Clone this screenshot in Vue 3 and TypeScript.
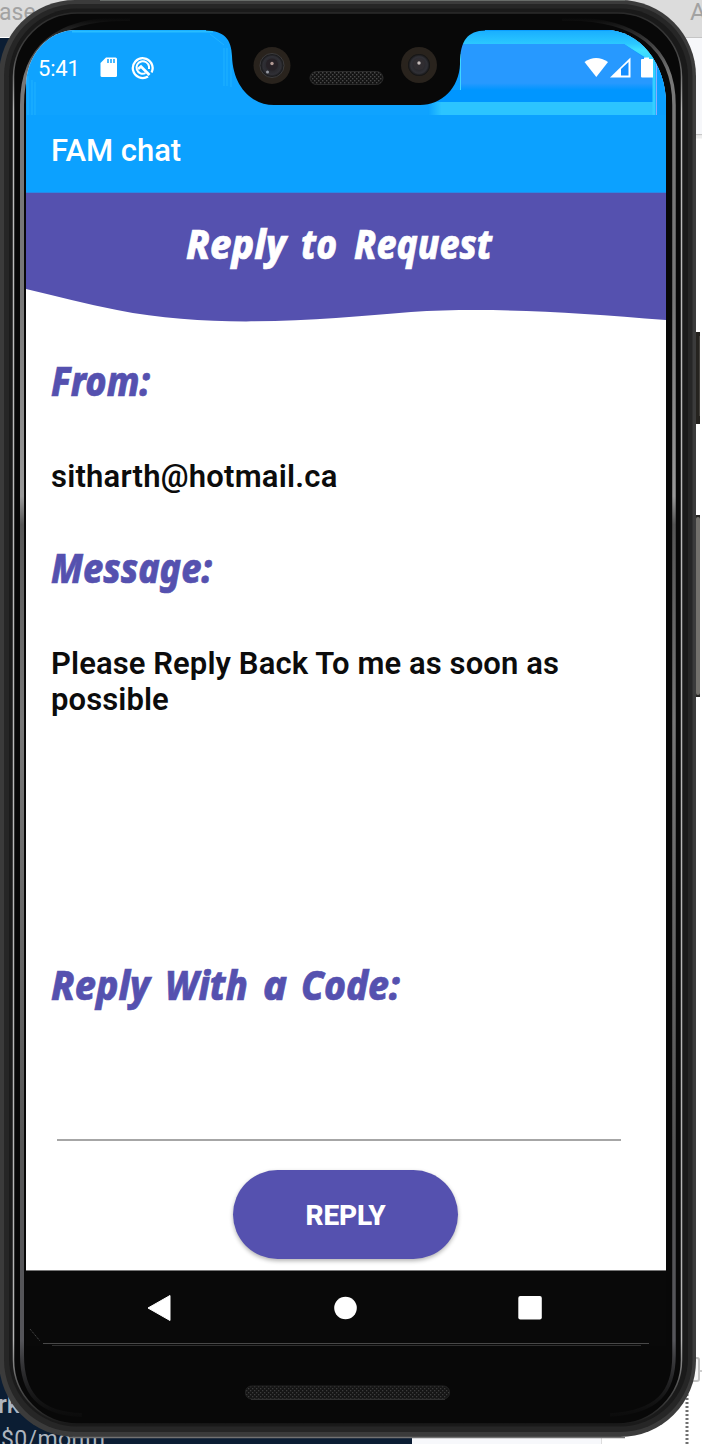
<script setup lang="ts">
interface Word { text: string; x: number; width: number }
interface Section { id: string; words: Word[]; lines: string[] }

const title: Word[] = [
  { text: 'Reply', x: 160, width: 100 },
  { text: 'to', x: 275, width: 36 },
  { text: 'Request', x: 328, width: 138 },
]

const sections: Section[] = [
  { id: 'from', words: [{ text: 'From:', x: 25, width: 99 }], lines: ['sitharth@hotmail.ca'] },
  {
    id: 'message',
    words: [{ text: 'Message:', x: 25, width: 161 }],
    lines: ['Please Reply Back To me as soon as', 'possible'],
  },
  {
    id: 'code',
    words: [
      { text: 'Reply', x: 25, width: 99 },
      { text: 'With', x: 139, width: 83 },
      { text: 'a', x: 237, width: 24 },
      { text: 'Code:', x: 275, width: 99 },
    ],
    lines: [],
  },
]
</script>

<template>
  <div class="stage">
    <svg class="backdrop" width="702" height="1444" viewBox="0 0 702 1444" aria-hidden="true">
      <defs>
        <linearGradient id="rail" gradientUnits="userSpaceOnUse" x1="0" y1="18" x2="0" y2="1425">
          <stop offset="0" stop-color="#8c8c8c" stop-opacity="0" />
          <stop offset="0.04" stop-color="#777" />
          <stop offset="0.2" stop-color="#777" />
          <stop offset="0.34" stop-color="#999" />
          <stop offset="0.36" stop-color="#555" />
          <stop offset="0.5" stop-color="#777" />
          <stop offset="0.8" stop-color="#555" />
          <stop offset="0.94" stop-color="#55555a" />
          <stop offset="1" stop-color="#222" stop-opacity="0" />
        </linearGradient>
        <linearGradient id="edge" gradientUnits="userSpaceOnUse" x1="0" y1="13" x2="0" y2="1425">
          <stop offset="0" stop-color="#2a2a2a" />
          <stop offset="0.03" stop-color="#444" />
          <stop offset="0.07" stop-color="#bbb" />
          <stop offset="0.94" stop-color="#b5b5b5" />
          <stop offset="0.97" stop-color="#555" />
          <stop offset="1" stop-color="#181818" />
        </linearGradient>
        <pattern id="mesh" width="4" height="4" patternUnits="userSpaceOnUse">
          <rect width="4" height="4" fill="#151515" />
          <rect width="1.3" height="1.3" fill="#3c3c3c" />
          <rect x="2" y="2" width="1.3" height="1.3" fill="#3c3c3c" />
        </pattern>
      </defs>
      <rect width="702" height="1444" fill="#fff" />
      <rect width="702" height="37" fill="#dcdcdc" />
      <rect x="600" y="37" width="102" height="97" fill="#f6f7fa" />
      <rect x="600" y="37" width="102" height="1" fill="#c5c5c5" />
      <rect x="600" y="134" width="102" height="1.5" fill="#c8c8c8" />
      <rect x="600" y="135.500" width="102" height="3" fill="#eee" />
      <rect y="38" width="100" height="1406" fill="#0b1d33" />
      <rect y="1376" width="412" height="68" fill="#0b1d33" />
      <rect x="412" y="1430" width="190" height="14" fill="#f7f8fb" />
      <rect x="601" y="1430" width="1" height="14" fill="#ddd" />
      <rect x="690" y="1358" width="9" height="23" rx="2" fill="#f4f4f4" stroke="#c4c4c4" stroke-width="2" />
      <path d="M700 1371h2" stroke="#999" />
      <path d="M687 1390V1444" stroke="#707070" stroke-width="3" stroke-dasharray="2 2" />
      <text x="-1" y="20" class="desk" fill="#a2a2a2" font-size="23">ase</text>
      <text x="690" y="20" class="desk" fill="#a2a2a2" font-size="24">A</text>
      <text x="-2" y="1413" class="desk heavy" fill="#aeb5be" font-size="25">rk</text>
      <text x="1" y="1447" class="desk" fill="#aeb5be" font-size="23" textLength="104">$0/month</text>

      <rect x="690" y="332" width="12" height="92" rx="2" fill="#25231f" />
      <rect x="699" y="336" width="1" height="80" fill="#45423d" />
      <rect x="690" y="515" width="12" height="182" rx="2" fill="#292826" />
      <rect x="696" y="517" width="4" height="178" rx="2" fill="#73716c" />
      <rect x="700" y="330" width="2" height="370" fill="#fff" />

      <rect x="-1" y="0" width="697" height="1437" rx="76" fill="#3b3b3b" />
      <rect x="4" y="4" width="688.500" height="1428" rx="72" fill="#262626" />
      <rect x="9" y="8.500" width="679" height="1418" rx="68" fill="#1a1a1a" />
      <rect x="13.500" y="13" width="668" height="1411" rx="64" fill="#080808" stroke="url(#edge)" stroke-width="1.500" />
      <path d="M130 19C55 17 22 49 22 105V1355C22 1392 38 1414 82 1415" fill="none" stroke="url(#rail)" stroke-width="4" />
      <path d="M562 19C637 17 674 49 674 105V1355C674 1392 658 1412 610 1415" fill="none" stroke="url(#rail)" stroke-width="3.500" />
      <path d="M100 0.500H625" stroke="#686c69" />
      <path d="M70 1437.500H625" stroke="#727272" stroke-width="1.500" />
      <rect x="245.500" y="1386" width="204" height="13" rx="6" fill="url(#mesh)" stroke="#222" />
      <path d="M251 1399.500H445" stroke="#303030" />
    </svg>

    <main class="screen">
      <header class="status">
        <svg class="glitch" width="640" height="85" viewBox="0 0 640 85" aria-hidden="true">
          <defs>
            <linearGradient id="sweep" x1="0" y1="0" x2="0" y2="1">
              <stop offset="0" stop-color="#2799ff" />
              <stop offset="0.85" stop-color="#2799ff" />
              <stop offset="1" stop-color="#0096ff" />
            </linearGradient>
            <linearGradient id="top" x1="0" y1="0" x2="0" y2="1">
              <stop offset="0" stop-color="#1aafff" />
              <stop offset="0.4" stop-color="#2bc8ff" />
              <stop offset="0.6" stop-color="#40e2ff" />
              <stop offset="1" stop-color="#36d0ff" />
            </linearGradient>
            <linearGradient id="fade" x1="0" y1="0" x2="1" y2="0">
              <stop offset="0" stop-color="#0da2ff" />
              <stop offset="0.06" stop-color="#2cc4ff" />
            </linearGradient>
          </defs>
          <path d="M46 1.500H187" fill="none" stroke="#28bdff" stroke-width="2" />
          <path d="M2 85V46M6 85V50M9 85V52M205 57V20M201 56V18M198 56V18M184 4L198 15" fill="none" stroke="#20b2ff" />
          <path d="M434 0H590L640 35V85H404V62L434 40Z" fill="#0b9fff" />
          <path d="M444 1H600L628 24V33L598 14H436Z" fill="url(#top)" />
          <path d="M435 14H598L627 34V60H435Z" fill="url(#sweep)" />
          <path d="M425 60H627V72H410Z" fill="#0096ff" />
          <rect x="402" y="72" width="226" height="13" fill="url(#fade)" />
          <path d="M628 26V85" stroke="#35cfff" stroke-width="3" />
          <path d="M630.500 26V85" stroke="#8aaaff" />
          <path d="M434.500 24V60" stroke="#3ed6ff" />
        </svg>
        <span class="clock">5:41</span>
        <svg class="sd" width="18" height="21" viewBox="0 0 18 21">
          <path d="M6 0.500H15.500Q17 0.500 17 2V18.500Q17 20 15.500 20H2Q0.500 20 0.500 18.500V6Z" fill="#fff" />
          <path d="M8 2V6M11 2V6M14 2V6" stroke="#0da2ff" stroke-width="1.500" />
        </svg>
        <svg class="scan" width="24" height="24" viewBox="0 0 24 24" fill="none">
          <path d="M17 20.500A9.900 9.900 0 1 1 20.600 16.500" stroke="#fff" stroke-width="2.300" />
          <path d="M14.500 17.200A6.300 6.300 0 1 1 18 10.500V13" stroke="#fff" stroke-width="2" />
          <path d="M7 13L10 10.500L18.500 19" stroke="#fff" stroke-width="2.700" />
        </svg>
        <svg class="signals" width="74" height="22" viewBox="0 0 74 22">
          <path d="M0.500 5Q12 -3 24 5L12.300 20Z" fill="#fff" />
          <path d="M26 20.500L46.500 0.500V20.500Z" fill="#fff" />
          <path d="M37 12L44.500 5V18.500H37Z" fill="#168eff" />
          <path d="M60 0.500H65V2H69V20.500H58Q57 20.500 57 19.500V3Q57 2 58 2H60Z" fill="#fff" />
        </svg>
      </header>

      <div class="appbar">FAM chat</div>

      <svg class="banner" width="640" height="130" viewBox="0 0 640 130" role="heading">
        <path d="M0 0H640V127C545 119 460 114 385 119C300 126 190 137 91 117C60 111 31 103 0 96Z" fill="#5551af" />
        <text class="display" y="66" fill="#fff" stroke="#fff">
          <tspan v-for="w in title" :key="w.text" :x="w.x" :textLength="w.width" lengthAdjust="spacingAndGlyphs">{{ w.text }}</tspan>
        </text>
      </svg>

      <section v-for="s in sections" :key="s.id" :class="['block', s.id]">
        <svg width="640" height="60" viewBox="0 0 640 60">
          <text class="display" y="43" fill="#5551af" stroke="#5551af">
            <tspan v-for="w in s.words" :key="w.text" :x="w.x" :textLength="w.width" lengthAdjust="spacingAndGlyphs">{{ w.text }}</tspan>
          </text>
        </svg>
        <p v-if="s.lines.length"><span v-for="l in s.lines" :key="l">{{ l }}</span></p>
        <div v-else class="field"></div>
      </section>

      <button class="reply" type="button">REPLY</button>

      <nav class="nav">
        <svg width="640" height="75" viewBox="0 1 640 75" fill="#fff">
          <path d="M144 25.500V50.500L122 38Z" stroke="#fff" stroke-linejoin="round" />
          <circle cx="319.500" cy="38" r="11.300" />
          <rect x="492.300" y="26" width="23.500" height="23.500" rx="2" />
          <path d="M17 73.500H623" stroke="#484848" />
          <path d="M26 75.500H615" stroke="#303030" />
          <path d="M4 59L14 71" stroke="#555" stroke-dasharray="1 1" />
        </svg>
      </nav>
    </main>

    <svg class="notch" width="250" height="80" viewBox="0 0 250 80" aria-hidden="true">
      <defs>
        <pattern id="speaker" width="4" height="4" patternUnits="userSpaceOnUse">
          <rect width="4" height="4" fill="#131313" />
          <rect width="1.400" height="1.400" fill="#484848" />
          <rect x="2" y="2" width="1.400" height="1.400" fill="#484848" />
        </pattern>
        <radialGradient id="lens">
          <stop offset="0" stop-color="#5c5351" />
          <stop offset="0.25" stop-color="#242326" />
          <stop offset="0.75" stop-color="#303036" />
          <stop offset="1" stop-color="#111" />
        </radialGradient>
      </defs>
      <path d="M-14 0.500C4 1 11.500 9 12 26C13 57 32 75 54 75H200C222 75 239 58 240 34C240 10 248 1 265 0.500V-1H-14Z" fill="#080808" />
      <g transform="translate(52 35.500)">
        <circle r="18.500" fill="#29231d" />
        <circle r="12" fill="url(#lens)" stroke="#4a4a4e" stroke-width="0.700" />
        <circle cx="0" cy="-1" r="6" fill="#262126" />
        <circle cx="0" cy="-2" r="1.700" fill="#b29a94" />
        <circle cx="-4.500" cy="6.500" r="1.500" fill="#999ca5" />
      </g>
      <g transform="translate(199 35)">
        <circle r="18" fill="#29231d" />
        <circle r="11" fill="url(#lens)" />
        <circle cx="0" cy="-1" r="6" fill="#302d31" />
        <circle cx="0" cy="-2" r="1.700" fill="#c4bbb9" />
      </g>
      <rect x="90" y="41.500" width="73" height="13" rx="6.500" fill="url(#speaker)" stroke="#2b2b2b" />
    </svg>
  </div>
</template>

<style>
body { margin: 0; overflow: hidden; }
</style>

<style scoped>
.stage { position: relative; width: 702px; height: 1444px; overflow: hidden; display: flex; font-family: Roboto, "Liberation Sans", sans-serif; }
.backdrop { position: absolute; left: 0; top: 0; }
.desk { font-family: Roboto, sans-serif; }
.heavy { font-weight: 500; }
.screen { position: relative; width: 640px; height: 1316px; margin: 30px 0 0 26px; display: flex; flex-direction: column; background: #fff; border-radius: 50px 60px 0 0 / 56px 74px 0 0; overflow: hidden; }
.screen svg { display: block; flex: none; }
.status { position: relative; height: 85px; box-sizing: border-box; padding: 25px 0 0 12px; background: #0fa3ff; color: #fff; display: flex; align-items: flex-start; flex: none; }
.status > * { position: relative; }
.status .glitch { position: absolute; left: 0; top: 0; }
.clock { width: 62px; font-size: 22px; line-height: 28px; letter-spacing: -0.2px; }
.sd { margin-top: 2px; }
.scan { margin: 1px 0 0 13px; }
.signals { margin: 2px 8px 0 auto; }
.appbar { height: 78px; box-sizing: border-box; padding-left: 25px; background: #0ca1ff; color: #fff; font-size: 31px; font-weight: 500; line-height: 72px; flex: none; border-bottom: 1px solid #2888e8; }
.display { font-family: "Noto Sans", "Open Sans", sans-serif; font-size: 41px; font-weight: 800; font-style: italic; stroke-width: 0.7px; }
.block { flex: none; }
.from { height: 187px; padding-top: 30px; box-sizing: border-box; }
.message { height: 417px; padding-top: 30px; box-sizing: border-box; }
.code { height: 243px; padding-top: 30px; box-sizing: border-box; }
.block p { margin: 46px 0 0 25px; color: #0c0c0c; font-size: 31px; font-weight: 600; line-height: 36px; letter-spacing: 0.1px; }
.from p { letter-spacing: 0.22px; }
.block p span { display: block; white-space: nowrap; }
.field { width: 564px; height: 108px; margin: 14px 0 0 31px; border-bottom: 2px solid #a6a6a6; }
.reply { margin: 0 0 0 207px; width: 225px; height: 89px; flex: none; padding: 2px 0 0; border: 0; border-radius: 45px; background: #5551af; color: #fff; font: 800 28px Roboto, sans-serif; letter-spacing: -0.2px; box-shadow: 0 2px 4px rgba(0, 0, 0, 0.3); }
.nav { margin-top: auto; height: 75px; flex: none; background: #090909; box-shadow: 0 -1px #777; }
.notch { position: absolute; left: 220px; top: 30px; overflow: visible; }
</style>
